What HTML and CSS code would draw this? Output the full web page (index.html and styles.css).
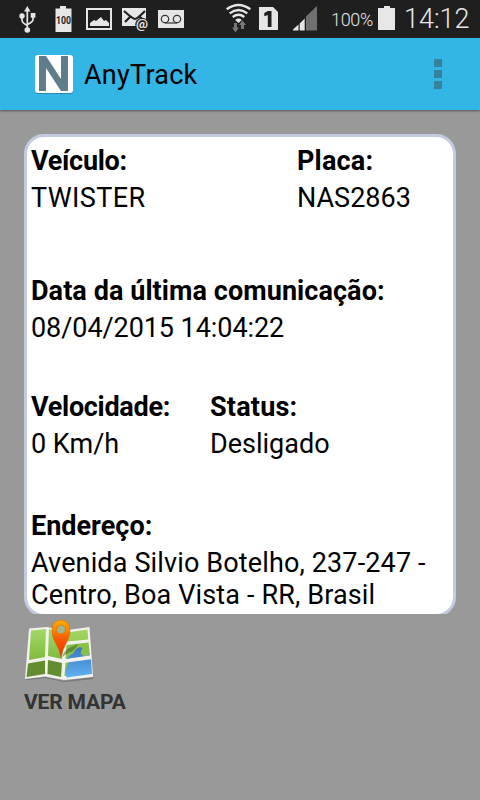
FILE: index.html
```html
<!DOCTYPE html>
<html lang="pt-BR">
<head>
  <meta charset="UTF-8">
  <title>AnyTrack</title>
  <link rel="stylesheet" href="styles.css">
</head>
<body>

  <div class="status-bar">
    <!-- notifications -->
    <svg class="notifications" width="200" height="38" viewBox="0 0 200 38">
      <g fill="none" stroke="#e6e6e6" stroke-width="1.7">
        <path d="M27.300 9v21M22 17v3q0 3 5.300 5.500M33 16v3.500q0 2.500-5.700 5"/>
      </g>
      <g fill="#e6e6e6">
        <path d="M27.300 6l3.200 5.500h-6.400z"/>
        <circle cx="22" cy="16" r="2.700"/>
        <rect x="30.700" y="13" width="4.700" height="4.700"/>
        <circle cx="27.300" cy="30" r="2.800"/>
        <path d="M60 6h6v2.500h5.500V32h-16V8.500H60z"/>
        <path fill-rule="evenodd" d="M86 8h26v22H86zM88 10v18h22V10z"/>
        <path d="M90 26v-3l4-3 2 1 5-4 3 4 2-1 3 3v3z"/>
        <path d="M122 8h24v18h-24z"/>
        <rect x="158" y="10" width="26" height="18"/>
      </g>
      <text class="tiny" x="56" y="24" textLength="15" lengthAdjust="spacingAndGlyphs">100</text>
      <path fill="none" stroke="#1f1f1f" stroke-width="2.200" d="M124 11q9 8 11 8t10-8M125 22l6-6M139 16l3 3"/>
      <circle cx="142" cy="24.500" r="6.800" fill="#1f1f1f"/>
      <text class="at" x="136" y="28.300" textLength="12" lengthAdjust="spacingAndGlyphs">@</text>
      <g fill="none" stroke="#333" stroke-width="1.200">
        <circle cx="165" cy="19" r="3.700"/>
        <circle cx="177" cy="19" r="3.700"/>
        <path d="M165 23h12"/>
      </g>
    </svg>
    <!-- wifi, sim and signal -->
    <svg class="signal" width="108" height="38" viewBox="216 0 108 38">
      <g fill="none" stroke="#e6e6e6" stroke-width="2.300">
        <path d="M226.700 9.300q11.800-8.600 23.600 0M229.700 13.300q8.800-6.600 17.600 0M232.700 17q5.800-4.400 11.600 0"/>
      </g>
      <path fill="#e6e6e6" d="M235.200 20q3.300-2.800 6.600 0l-3.300 3z"/>
      <path fill="#777" d="M234 23h3v4.500h2l-3.500 5-3.500-5h2zM241 29v-4h-2l3.500-4.500 3.500 4.500h-2v4z"/>
      <path fill="#e6e6e6" d="M259 7h14l5 5v18h-19z"/>
      <path fill="#1f1f1f" d="M267.800 11h3.700v16h-3.700V15l-3.500 1.200V13z"/>
      <path fill="#e6e6e6" d="M293 30.500v-1l5.500-5v6zM299.700 30.500V23.500l5-5v12z"/>
      <path fill="#707070" d="M306 30.500v-14L317 6v24.500z"/>
    </svg>
    <span class="percent">100%</span>
    <svg class="battery" width="17" height="38" viewBox="0 0 17 38">
      <path fill="#e6e6e6" d="M6 6h6v2h5v22H0V8h6z"/>
    </svg>
    <span class="clock">14:12</span>
  </div>

  <div class="action-bar">
    <svg class="logo" width="40" height="41" viewBox="0 0 40 41">
      <rect x="1" y="2" width="38" height="38" rx="3" fill="#2688ad"/>
      <rect x="1" y="1" width="38" height="38" rx="3" fill="#fff"/>
      <path fill="#607d8b" d="M5 2h7l15 23V2h7v35h-7L12 14v23H5z"/>
    </svg>
    <h1 class="app-name">AnyTrack</h1>
    <div class="overflow">
      <span></span>
      <span></span>
      <span></span>
    </div>
  </div>

  <div class="content">
    <div class="card-clip">
      <div class="card">
        <div class="row row-vehicle">
          <div class="field vehicle">
            <div class="label label-tight">Veículo:</div>
            <div class="value value-wide">TWISTER</div>
          </div>
          <div class="field">
            <div class="label label-wide">Placa:</div>
            <div class="value">NAS2863</div>
          </div>
        </div>
        <div class="row row-date">
          <div class="field">
            <div class="label label-date">Data da última comunicação:</div>
            <div class="value value-date">08/04/2015 14:04:22</div>
          </div>
        </div>
        <div class="row row-speed">
          <div class="field speed">
            <div class="label label-tight">Velocidade:</div>
            <div class="value">0 Km/h</div>
          </div>
          <div class="field">
            <div class="label label-wide">Status:</div>
            <div class="value">Desligado</div>
          </div>
        </div>
        <div class="row">
          <div class="field">
            <div class="label">Endereço:</div>
            <div class="value value-address">Avenida Silvio Botelho, 237-247 -<br>Centro, Boa Vista - RR, Brasil</div>
          </div>
        </div>
      </div>
    </div>

    <div class="map-button">
      <svg width="72" height="72" viewBox="0 0 72 72">
        <defs>
          <linearGradient id="pin" x1="0" y1="0" x2="0" y2="1">
            <stop offset="0" stop-color="#ffb000"/>
            <stop offset=".5" stop-color="#fa5a05"/>
            <stop offset="1" stop-color="#e63200"/>
          </linearGradient>
          <linearGradient id="grass" x1="0" y1="0" x2="0" y2="1">
            <stop offset="0" stop-color="#a5d867"/>
            <stop offset="1" stop-color="#7ebb3c"/>
          </linearGradient>
          <linearGradient id="water" x1="0" y1="0" x2="0" y2="1">
            <stop offset="0" stop-color="#3977c4"/>
            <stop offset="1" stop-color="#5fb2ee"/>
          </linearGradient>
        </defs>
        <path fill="#777" d="M1 65l20-2 19 4 29-4v2l-29 3-19-4-18 2z"/>
        <path fill="#f1f2ec" d="M5 14.500L23 13l17 3.500L65.500 13l3.500 50-29 3-19-3.500-20 2.500z"/>
        <path fill="url(#grass)" d="M7 16.500l15-1.500-1 28-16 3zM25 15l14 3-1 27-14-3zM43 18.500l20.500-3 .7 10L43 27.500z"/>
        <path fill="#648d30" d="M4 49.500l17-3V60L2.500 63zM24 46l14 3-1 14-13.500-3z"/>
        <path fill="#89bf4b" d="M42.500 31l22-2.500L66 41l-24.500 4zM41.500 49l4-1-3 14h-2z"/>
        <path fill="url(#water)" d="M43 44.700q3-4.700 6-5 1.500-4 5-6 3-1 4.500 1-3 3-1 6 2 2 8 0v.7zM45 48.300l22-3L68 60l-25.500 3.500q-2-8 2.500-15.200z"/>
        <path fill="#314a24" opacity=".45" d="M38 43q2-7 9-10l7-3q-3 7-10 9z"/>
        <path fill="url(#pin)" stroke="#cd6a0c" stroke-width=".5" d="M37 43.500q-1.500-8-5.500-14.500Q28 23.500 28 16q0-9.500 9-10 9 .5 9 10 0 7-3.500 12.500-4 7-5.500 15z"/>
        <circle cx="37" cy="15.500" r="4.500" fill="#a3b58c" stroke="#e07a00"/>
      </svg>
      <div class="map-label">VER MAPA</div>
    </div>
  </div>

</body>
</html>
```
FILE: styles.css
```css
* { box-sizing: border-box; margin: 0; padding: 0; }
body {
  width: 480px;
  height: 800px;
  overflow: hidden;
  background-color: #999;
  color: #000;
  font-family: Roboto, sans-serif;
}
svg { display: block; flex: none; }

.status-bar {
  display: flex;
  height: 38px;
  background-color: #1f1f1f;
  color: #e6e6e6;
}
.notifications { margin-right: 16px; }
.signal { margin-right: 7px; }
.tiny { font-size: 10px; font-weight: bold; fill: #1f1f1f; }
.at { font-size: 13px; font-weight: bold; fill: #e6e6e6; }
.percent {
  width: 47px;
  font-size: 18px;
  font-weight: 300;
  letter-spacing: -0.3px;
  line-height: 40px;
}
.clock {
  margin-left: 9px;
  font-size: 27px;
  font-weight: 300;
  line-height: 38px;
}

.action-bar {
  display: flex;
  align-items: center;
  height: 72px;
  padding: 0 38px 0 34px;
  background-color: #33b5e5;
  box-shadow: 0 1px 2px #555;
}
.app-name {
  flex: 1;
  margin-left: 10px;
  padding-top: 2px;
  font-size: 27px;
  font-weight: normal;
  letter-spacing: 0.25px;
  line-height: 32px;
}
.overflow {
  display: flex;
  flex-direction: column;
  gap: 3px;
}
.overflow span {
  width: 8px; height: 8px;
  background-color: #34829e;
}

.content { padding: 24px 24px 0; }
/* the card is cut just before its bottom border */
.card-clip {
  height: 480px;
  overflow: hidden;
}
.card {
  height: 483px;
  padding: 8px 4px;
  background-color: #fff;
  border: 3px solid #c3cbe0;
  border-radius: 20px;
  font-size: 27px;
  line-height: 32px;
}
.row { display: flex; white-space: nowrap; }
.row-vehicle { height: 130px; }
.row-date { height: 116px; }
.row-speed { height: 119px; }
.vehicle { width: 266px; }
.speed { width: 179px; }
.label { font-weight: bold; margin-bottom: 5px; }
.label-tight { letter-spacing: -0.3px; }
.label-wide { letter-spacing: 0.2px; }
.label-date { letter-spacing: 0.07px; }
.value-wide { letter-spacing: 0.4px; }
.value-date { letter-spacing: -0.07px; }
.value-address { letter-spacing: 0.14px; }

.map-label {
  margin-top: 4px;
  color: #333;
  font-size: 21px;
  font-weight: bold;
  letter-spacing: -0.15px;
  line-height: 24px;
}
```
